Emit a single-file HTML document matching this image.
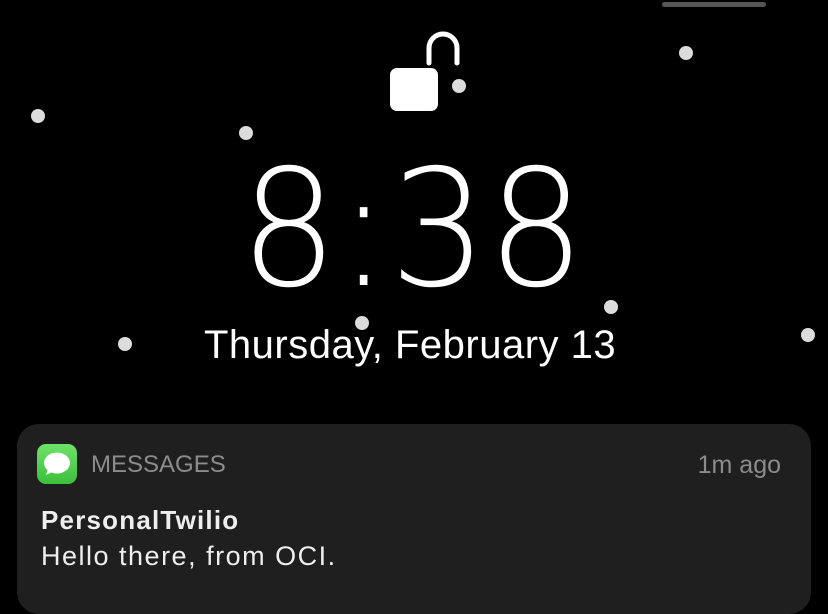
<!DOCTYPE html>
<html><head><meta charset="utf-8"><style>
html,body{margin:0;padding:0;background:#000;width:828px;height:598px;overflow:hidden;font-family:"Liberation Sans",sans-serif}
.dot{position:absolute;width:14px;height:14px;border-radius:50%;background:#dcdcdc}
.t{position:absolute;white-space:nowrap}
</style></head><body>
<div style="position:absolute;left:662px;top:2px;width:104px;height:5px;border-radius:3px;background:#555"></div>
<svg style="position:absolute;left:0;top:0" width="828" height="420">
<rect x="390" y="68" width="48" height="43" rx="7" fill="#fff"/>
<path d="M429 63 V48 a14 14 0 0 1 28 0 V63" fill="none" stroke="#fff" stroke-width="5" stroke-linecap="round"/>
<text x="240" y="285" font-family="DejaVu Sans" font-weight="200" font-size="162" fill="#fff" textLength="345" lengthAdjust="spacingAndGlyphs">8:38</text>
</svg>
<div class="dot" style="left:31px;top:109px"></div>
<div class="dot" style="left:239px;top:126px"></div>
<div class="dot" style="left:452px;top:79px"></div>
<div class="dot" style="left:679px;top:46px"></div>
<div class="dot" style="left:355px;top:316px"></div>
<div class="dot" style="left:604px;top:300px"></div>
<div class="dot" style="left:118px;top:337px"></div>
<div class="dot" style="left:801px;top:328px"></div>
<div class="t" style="left:204px;top:323px;font-size:40px;letter-spacing:0.5px;color:#fff">Thursday, February 13</div>
<div style="position:absolute;left:17px;top:424px;width:794px;height:190px;border-radius:22px;background:#1f1f1f"></div>
<div style="position:absolute;left:37px;top:444px;width:40px;height:40px;border-radius:9px;background:linear-gradient(#6ee26a,#3cbf3c)"></div>
<svg style="position:absolute;left:37px;top:444px" width="40" height="40"><ellipse cx="20" cy="19" rx="13" ry="10.5" fill="#fff"/><path d="M11 25 L9 31 L17 27Z" fill="#fff"/></svg>
<div class="t" style="left:91px;top:451px;font-size:24px;color:#8c8c8c">MESSAGES</div>
<div class="t" style="right:47px;top:451px;font-size:25px;color:#8c8c8c">1m ago</div>
<div class="t" style="left:41px;top:505px;font-size:26px;font-weight:bold;letter-spacing:1.2px;color:#eee">PersonalTwilio</div>
<div class="t" style="left:41px;top:541px;font-size:27px;letter-spacing:1.5px;color:#eee">Hello there, from OCI.</div>
</body></html>
